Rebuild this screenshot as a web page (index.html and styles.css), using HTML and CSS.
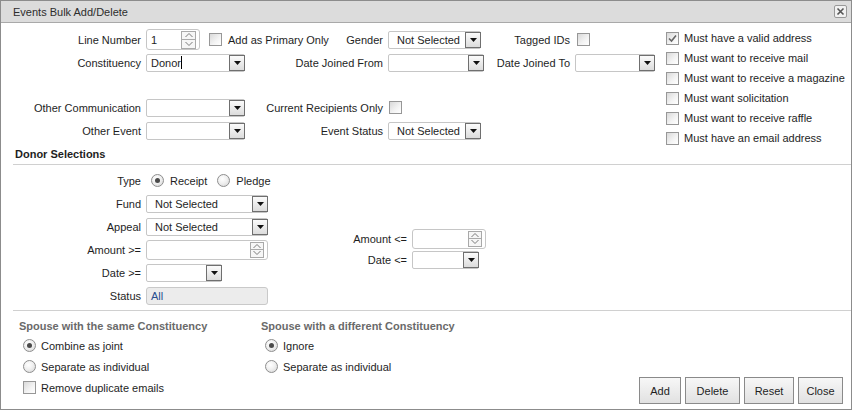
FILE: index.html
```html
<!DOCTYPE html>
<html>
<head>
<meta charset="utf-8">
<title>Events Bulk Add/Delete</title>
<link rel="stylesheet" href="styles.css">
</head>
<body>
<div class="win">
  <div class="titlebar">
    <span class="title">Events Bulk Add/Delete</span>
    <span class="close"><svg width="11" height="11" viewBox="0 0 11 11"><path d="M2.5 2.5 L8.5 8.5 M8.5 2.5 L2.5 8.5" stroke="#555" stroke-width="1.6" fill="none"/></svg></span>
  </div>

  <div class="top">
    <div class="top-grid">
      <div class="lbl">Line Number</div>
      <div class="cell">
        <span class="spin w54"><span class="val">1</span><span class="spin-btns"><span class="sb"><svg width="10" height="6" viewBox="0 0 10 6"><path d="M1.5 5 L5 1.5 L8.5 5" stroke="#7a7a7a" fill="none"/></svg></span><span class="sb"><svg width="10" height="6" viewBox="0 0 10 6"><path d="M1.5 1 L5 4.5 L8.5 1" stroke="#7a7a7a" fill="none"/></svg></span></span></span>
        <span class="cb ml9"></span><span class="cbtxt">Add as Primary Only</span>
      </div>
      <div class="lbl">Gender</div>
      <div class="cell"><span class="sel w93"><span class="val">Not Selected</span><span class="arr"><svg width="7" height="4" viewBox="0 0 7 4"><path d="M0 0 H7 L3.5 4 Z" fill="#111"/></svg></span></span></div>
      <div class="lbl">Tagged IDs</div>
      <div class="cell"><span class="cb ml2"></span></div>

      <div class="lbl">Constituency</div>
      <div class="cell"><span class="sel w99 edit"><span class="val">Donor<span class="caret"></span></span><span class="arr"><svg width="7" height="4" viewBox="0 0 7 4"><path d="M0 0 H7 L3.5 4 Z" fill="#111"/></svg></span></span></div>
      <div class="lbl">Date Joined From</div>
      <div class="cell"><span class="sel w96"><span class="val"></span><span class="arr"><svg width="7" height="4" viewBox="0 0 7 4"><path d="M0 0 H7 L3.5 4 Z" fill="#111"/></svg></span></span></div>
      <div class="lbl">Date Joined To</div>
      <div class="cell"><span class="sel w80"><span class="val"></span><span class="arr"><svg width="7" height="4" viewBox="0 0 7 4"><path d="M0 0 H7 L3.5 4 Z" fill="#111"/></svg></span></span></div>

      <div class="spacer"></div>

      <div class="lbl">Other Communication</div>
      <div class="cell"><span class="sel w99"><span class="val"></span><span class="arr"><svg width="7" height="4" viewBox="0 0 7 4"><path d="M0 0 H7 L3.5 4 Z" fill="#111"/></svg></span></span></div>
      <div class="lbl">Current Recipients Only</div>
      <div class="cell"><span class="cb ml1"></span></div>
      <div></div><div></div>

      <div class="lbl">Other Event</div>
      <div class="cell"><span class="sel w99"><span class="val"></span><span class="arr"><svg width="7" height="4" viewBox="0 0 7 4"><path d="M0 0 H7 L3.5 4 Z" fill="#111"/></svg></span></span></div>
      <div class="lbl">Event Status</div>
      <div class="cell"><span class="sel w93"><span class="val">Not Selected</span><span class="arr"><svg width="7" height="4" viewBox="0 0 7 4"><path d="M0 0 H7 L3.5 4 Z" fill="#111"/></svg></span></span></div>
      <div></div><div></div>
    </div>

    <div class="checklist">
      <div class="chk-row"><span class="cb checked"><svg width="11" height="11" viewBox="0 0 11 11"><path d="M2 5.5 L4.5 8 L9 2.5" stroke="#666" stroke-width="1.6" fill="none"/></svg></span><span>Must have a valid address</span></div>
      <div class="chk-row"><span class="cb"></span><span>Must want to receive mail</span></div>
      <div class="chk-row"><span class="cb"></span><span>Must want to receive a magazine</span></div>
      <div class="chk-row"><span class="cb"></span><span>Must want solicitation</span></div>
      <div class="chk-row"><span class="cb"></span><span>Must want to receive raffle</span></div>
      <div class="chk-row"><span class="cb"></span><span>Must have an email address</span></div>
    </div>
  </div>

  <div class="section-head">Donor Selections</div>

  <div class="donor">
    <div class="donor-grid">
      <div class="lbl">Type</div>
      <div class="cell">
        <span class="radio on ml5"></span><span class="rtxt">Receipt</span>
        <span class="radio ml10"></span><span class="rtxt">Pledge</span>
      </div>
      <div class="lbl">Fund</div>
      <div class="cell"><span class="sel w122"><span class="val">Not Selected</span><span class="arr"><svg width="7" height="4" viewBox="0 0 7 4"><path d="M0 0 H7 L3.5 4 Z" fill="#111"/></svg></span></span></div>
      <div class="lbl">Appeal</div>
      <div class="cell"><span class="sel w122"><span class="val">Not Selected</span><span class="arr"><svg width="7" height="4" viewBox="0 0 7 4"><path d="M0 0 H7 L3.5 4 Z" fill="#111"/></svg></span></span></div>
      <div class="lbl">Amount &gt;=</div>
      <div class="cell">
        <span class="spin w122 h20"><span class="val"></span><span class="spin-btns sm"><span class="sb"><svg width="10" height="6" viewBox="0 0 10 6"><path d="M1.5 5 L5 1.5 L8.5 5" stroke="#7a7a7a" fill="none"/></svg></span><span class="sb"><svg width="10" height="6" viewBox="0 0 10 6"><path d="M1.5 1 L5 4.5 L8.5 1" stroke="#7a7a7a" fill="none"/></svg></span></span></span>
      </div>
      <div class="lbl">Date &gt;=</div>
      <div class="cell"><span class="sel w76"><span class="val"></span><span class="arr"><svg width="7" height="4" viewBox="0 0 7 4"><path d="M0 0 H7 L3.5 4 Z" fill="#111"/></svg></span></span></div>
      <div class="lbl">Status</div>
      <div class="cell"><span class="status">All</span></div>
    </div>

    <div class="donor-right">
      <div class="lbl">Amount &lt;=</div>
      <div class="cell">
        <span class="spin w74 h20"><span class="val"></span><span class="spin-btns sm"><span class="sb"><svg width="10" height="6" viewBox="0 0 10 6"><path d="M1.5 5 L5 1.5 L8.5 5" stroke="#7a7a7a" fill="none"/></svg></span><span class="sb"><svg width="10" height="6" viewBox="0 0 10 6"><path d="M1.5 1 L5 4.5 L8.5 1" stroke="#7a7a7a" fill="none"/></svg></span></span></span>
      </div>
      <div class="lbl">Date &lt;=</div>
      <div class="cell"><span class="sel w67"><span class="val"></span><span class="arr"><svg width="7" height="4" viewBox="0 0 7 4"><path d="M0 0 H7 L3.5 4 Z" fill="#111"/></svg></span></span></div>
    </div>
  </div>

  <div class="sep"></div>

  <div class="bottom">
    <div class="spouse-col c1">
      <div class="sp-head">Spouse with the same Constituency</div>
      <div class="sp-row"><span class="radio on"></span><span>Combine as joint</span></div>
      <div class="sp-row"><span class="radio"></span><span>Separate as individual</span></div>
      <div class="sp-row"><span class="cb"></span><span>Remove duplicate emails</span></div>
    </div>
    <div class="spouse-col c2">
      <div class="sp-head">Spouse with a different Constituency</div>
      <div class="sp-row"><span class="radio on"></span><span>Ignore</span></div>
      <div class="sp-row"><span class="radio"></span><span>Separate as individual</span></div>
    </div>
    <div class="buttons">
      <button class="btn b-add">Add</button>
      <button class="btn b-del">Delete</button>
      <button class="btn b-reset">Reset</button>
      <button class="btn b-close">Close</button>
    </div>
  </div>
</div>
</body>
</html>
```

FILE: styles.css
```css
* { box-sizing: border-box; }

body {
  margin: 0;
  background: #fff;
  font: 11px "Liberation Sans", Arial, sans-serif;
  color: #1e1e1e;
}

.win {
  width: 852px;
  height: 410px;
  border: 1px solid #8c8c8c;
  display: flex;
  flex-direction: column;
  background: #fff;
}

/* title bar */
.titlebar {
  height: 22px;
  flex: none;
  background: #dcdcdc;
  border-bottom: 1px solid #a9a9a9;
  display: flex;
  align-items: center;
  justify-content: space-between;
  padding: 0 4px 0 12px;
}
.title { color: #2d2d2d; }
.close {
  width: 13px;
  height: 13px;
  border: 1px solid #999;
  border-radius: 2px;
  background: #f1f1f1;
  display: flex;
  align-items: center;
  justify-content: center;
}

/* generic cells */
.lbl {
  display: flex;
  align-items: center;
  justify-content: flex-end;
  padding-right: 5px;
  white-space: nowrap;
}
.cell {
  display: flex;
  align-items: center;
  white-space: nowrap;
}

/* top area */
.top {
  height: 123px;
  flex: none;
  display: flex;
  align-items: flex-start;
  padding: 5px 0 0 12px;
}
.top-grid {
  margin-top: 0;
  display: grid;
  grid-template-columns: 133px 100px 142px 102px 85px 80px;
  grid-template-rows: 23px 23px 22px 23px 23px;
}
.spacer { grid-column: 1 / -1; }

.checklist {
  margin-left: 11px;
  display: flex;
  flex-direction: column;
}
.chk-row {
  height: 20px;
  display: flex;
  align-items: center;
  gap: 5px;
  white-space: nowrap;
}

/* checkbox */
.cb {
  flex: none;
  width: 13px;
  height: 13px;
  border: 1px solid #979797;
  background: linear-gradient(135deg, #d9d9d9 0%, #f4f4f4 60%, #fff 100%);
  display: inline-flex;
  align-items: center;
  justify-content: center;
}
.cbtxt { margin-left: 6px; }
.ml1 { margin-left: 1px; }
.ml2 { margin-left: 2px; }
.ml5 { margin-left: 5px; }
.ml9 { margin-left: 9px; }
.ml10 { margin-left: 10px; }

/* radio */
.radio {
  flex: none;
  width: 13px;
  height: 13px;
  border-radius: 50%;
  border: 1px solid #8e8e8e;
  background: radial-gradient(circle at 40% 35%, #fff 0%, #f0f0f0 45%, #d3d3d3 100%);
  display: inline-flex;
  align-items: center;
  justify-content: center;
}
.radio.on::after {
  content: "";
  width: 5px;
  height: 5px;
  border-radius: 50%;
  background: #4a4a4a;
}
.rtxt { margin-left: 6px; }

/* select */
.sel {
  flex: none;
  height: 18px;
  border: 1px solid #c6c6c6;
  border-radius: 2px;
  display: flex;
  align-items: center;
  justify-content: space-between;
  padding-left: 8px;
  background: #fff;
}
.sel.edit { padding-left: 4px; }
.sel .val { display: flex; align-items: center; }
.caret {
  display: inline-block;
  width: 1px;
  height: 13px;
  background: #000;
}
.arr {
  flex: none;
  width: 16px;
  height: 16px;
  margin-right: -1px;
  border: 1px solid #6f6f6f;
  background: linear-gradient(#fbfbfb, #dcdcdc);
  display: flex;
  align-items: center;
  justify-content: center;
}
.w54 { width: 54px; }
.w67 { width: 67px; }
.w74 { width: 74px; }
.w76 { width: 76px; }
.w80 { width: 80px; }
.w93 { width: 93px; }
.w96 { width: 96px; }
.w99 { width: 99px; }
.w122 { width: 122px; }

/* spinner */
.spin {
  flex: none;
  height: 21px;
  border: 1px solid #c6c6c6;
  border-radius: 3px;
  display: flex;
  align-items: center;
  justify-content: space-between;
  padding: 0 3px 0 4px;
  background: #fff;
}
.spin.h20 { height: 20px; padding-right: 3px; }
.spin-btns {
  display: flex;
  flex-direction: column;
  width: 15px;
}
.spin-btns .sb {
  height: 9px;
  border: 1px solid #a9a9a9;
  background: #f6f6f6;
  display: flex;
  align-items: center;
  justify-content: center;
}
.spin-btns .sb + .sb { border-top: none; height: 9px; }
.spin-btns.sm { width: 14px; }
.spin-btns.sm .sb { height: 8px; }

/* status field */
.status {
  flex: none;
  width: 122px;
  height: 18px;
  border: 1px solid #c9c9c9;
  border-radius: 3px;
  background: #ececec;
  color: #2a4f8f;
  padding-left: 4px;
  display: flex;
  align-items: center;
}

/* donor selections */
.section-head {
  flex: none;
  margin-left: 12px;
  padding: 0 0 2px 2px;
  line-height: 16px;
  font-weight: bold;
  border-bottom: 1px solid #d0d0d0;
}
.donor {
  flex: none;
  display: flex;
  padding: 4px 0 0 12px;
}
.donor-grid {
  display: grid;
  grid-template-columns: 133px 155px;
  grid-auto-rows: 23px;
}
.donor-right {
  display: grid;
  grid-template-columns: 111px auto;
  grid-auto-rows: 21px;
  padding-top: 59px;
  align-content: start;
}

.sep {
  flex: none;
  margin: 3px 0 0 12px;
  border-top: 1px solid #d0d0d0;
}

/* bottom */
.bottom {
  flex: 1;
  display: flex;
  padding-left: 18px;
}
.spouse-col {
  padding-top: 7px;
  display: flex;
  flex-direction: column;
}
.spouse-col.c1 { width: 242px; }
.sp-head {
  line-height: 16px;
  font-weight: bold;
  color: #6a6a6a;
  margin-bottom: 1px;
  white-space: nowrap;
}
.sp-row {
  height: 21px;
  display: flex;
  align-items: center;
  gap: 5px;
  padding-left: 4px;
  white-space: nowrap;
}

.buttons {
  margin-left: auto;
  align-self: flex-end;
  display: flex;
  gap: 4px;
  padding: 0 8px 5px 0;
}
.btn {
  height: 27px;
  padding: 0;
  border: 1px solid #8a8a8a;
  background: linear-gradient(#f7f7f7, #e1e1e1);
  font: 11px "Liberation Sans", Arial, sans-serif;
  color: #1e1e1e;
}
.b-add { width: 42px; }
.b-del { width: 55px; }
.b-reset { width: 50px; }
.b-close { width: 45px; }
```
